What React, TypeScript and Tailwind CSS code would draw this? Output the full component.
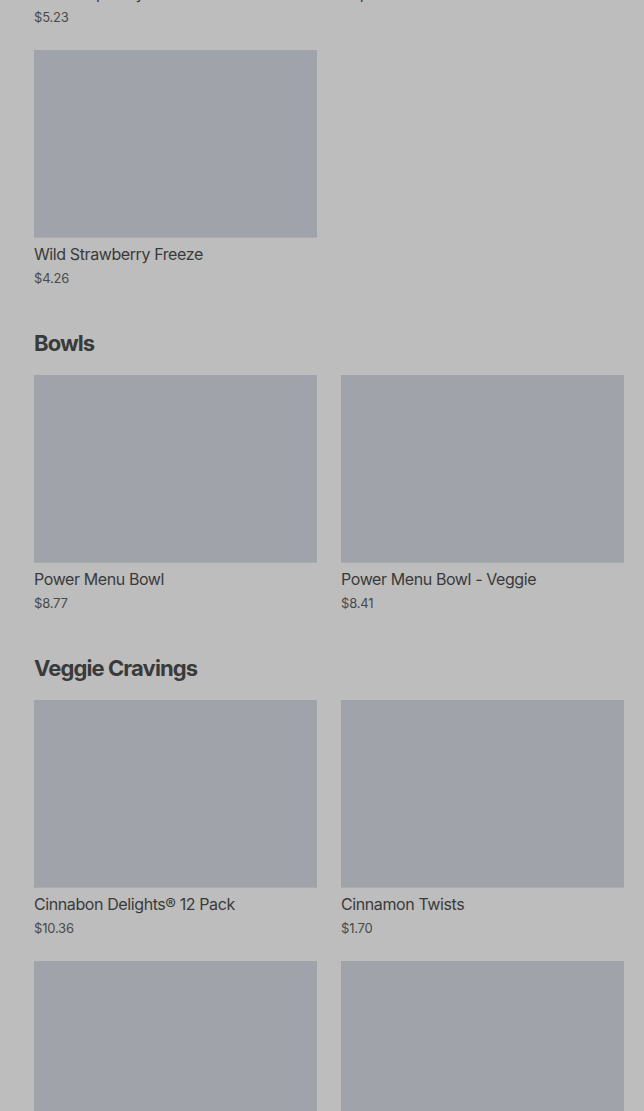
import React from "react";

type Item = { name?: string; price?: string };

const sections: { title?: string; items: Item[] }[] = [
  {
    items: [
      { name: "Blue Raspberry Freeze", price: "$5.23" },
      { name: "Pepsi" },
      { name: "Wild Strawberry Freeze", price: "$4.26" },
    ],
  },
  {
    title: "Bowls",
    items: [
      { name: "Power Menu Bowl", price: "$8.77" },
      { name: "Power Menu Bowl - Veggie", price: "$8.41" },
    ],
  },
  {
    title: "Veggie Cravings",
    items: [
      { name: "Cinnabon Delights® 12 Pack", price: "$10.36" },
      { name: "Cinnamon Twists", price: "$1.70" },
      {},
      {},
    ],
  },
];

function Card({ item }: { item: Item }) {
  return (
    <div className="flex flex-col">
      <div className="h-[188px] bg-[#a0a3aa] border-b border-[#a9abb0]" />
      {item.name && (
        <div className="mt-[7px] text-[16px] leading-[18px] font-normal text-[#3a3a3a] tracking-[-0.4px]">
          {item.name}
        </div>
      )}
      {item.price && (
        <div className="mt-[7px] text-[13px] leading-[16px] text-[#4a4a4a] tracking-[-0.2px]">{item.price}</div>
      )}
    </div>
  );
}

export default function App() {
  return (
    <div
      className="h-[1111px] overflow-hidden bg-[#bdbdbd] pl-[34px] pr-[20px]"
      style={{ fontFamily: "Inter, 'Noto Sans', 'Liberation Sans', sans-serif" }}
    >
      <div className="-mt-[211px] flex flex-col gap-[43px]">
        {sections.map((s, i) => (
          <section key={i}>
            {s.title && (
              <h2 className="text-[22px] leading-[28px] font-bold tracking-[-0.9px] text-[#3a3a3a] mb-[18px]">
                {s.title}
              </h2>
            )}
            <div className="grid grid-cols-2 gap-x-[24px] gap-y-[25px]">
              {s.items.map((it, j) => (
                <Card key={j} item={it} />
              ))}
            </div>
          </section>
        ))}
      </div>
    </div>
  );
}
